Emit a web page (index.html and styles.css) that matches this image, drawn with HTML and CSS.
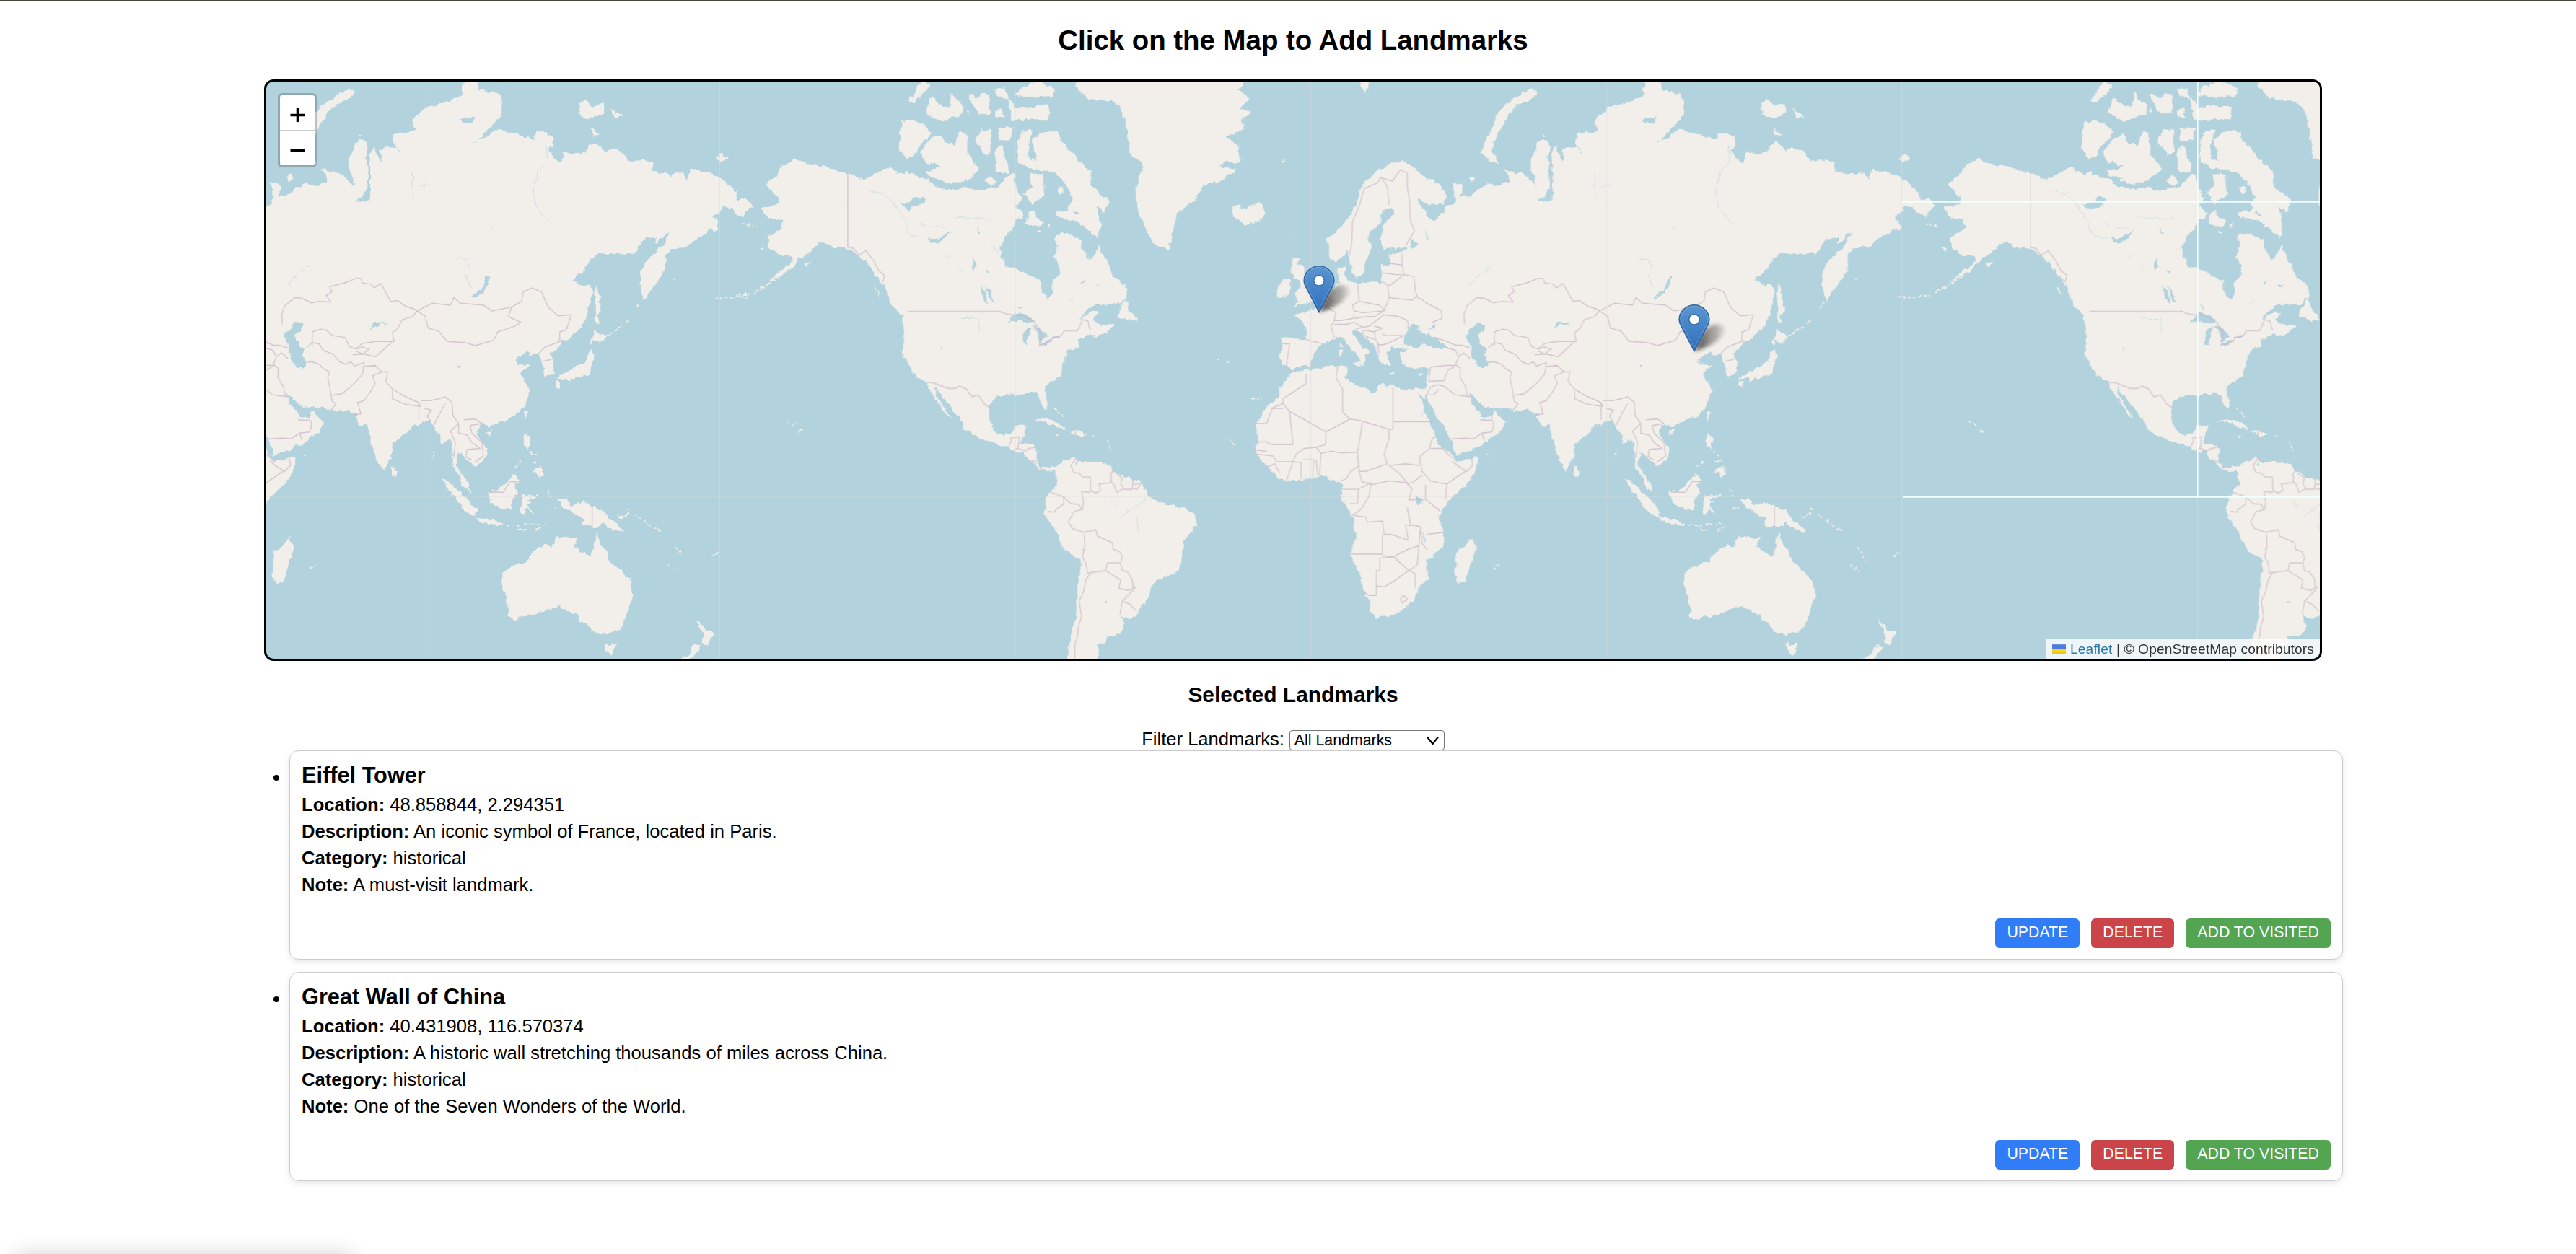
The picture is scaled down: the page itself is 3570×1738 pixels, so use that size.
FILE: index.html
```html
<!DOCTYPE html>
<html lang="en">
<head>
<meta charset="utf-8">
<title>Landmarks</title>
<link rel="stylesheet" href="styles.css">
</head>
<body>
<main class="page">
  <h2 class="title">Click on the Map to Add Landmarks</h2>
  <section class="map">
    <svg class="tiles" viewBox="-2898.6 24.6 6198 1511.3" preserveAspectRatio="none">
      <defs>
        <filter id="coast" filterUnits="userSpaceOnUse" x="-2900" y="0" width="6220" height="1560">
          <feTurbulence type="fractalNoise" baseFrequency="0.06" numOctaves="3" seed="4" result="n"/>
          <feDisplacementMap in="SourceGraphic" in2="n" scale="15" xChannelSelector="R" yChannelSelector="G"/>
        </filter>
        <g id="world">
          <g class="land">
            <!-- Europe and western Asia -->
            <path d="M530 230 562 248 600 275 640 290 663 325 655 345 615 348 575 330 583 350 600 358 605 380 630 390 640 375 655 365 660 350 690 345 690 320 685 290 710 295 715 308 702 325 730 328 760 305 790 290 815 298 843 288 856 284 850 270 835 250 860 262 890 264 925 290 936 300 930 280 918 250 918 230 935 200 940 180 970 178 976 195 968 225 975 250 975 300 960 325 938 335 970 342 1000 325 1000 800 900 885 815 878 780 878 760 865 745 847 732 842 740 865 765 890 770 905 800 900 812 885 825 905 846 915 830 940 805 955 775 975 730 990 690 1003 680 965 655 930 632 900 615 870 600 848 599 828 606 805 612 778 590 773 560 778 530 765 522 738 545 727 525 722 500 722 482 735 495 765 475 768 462 758 455 735 450 717 430 705 408 688 390 672 378 675 380 690 405 715 435 735 420 738 415 765 406 770 402 750 370 720 350 692 325 697 300 712 285 710 265 740 250 768 215 772 195 780 180 768 165 765 160 740 168 710 163 695 200 697 240 700 242 670 208 635 240 625 270 615 285 600 305 590 325 560 340 550 335 515 360 505 355 530 365 545 395 555 440 548 465 552 470 520 465 505 493 503 488 477 530 470 548 460 500 463 475 462 465 440 470 405 505 370 500 355 478 358 465 375 465 395 430 420 428 440 440 462 420 490 415 525 388 540 370 490 365 465 350 485 330 497 310 485 305 435 340 410 365 385 395 340 400 310 425 280 460 255 500 240Z"/>
            <!-- Africa -->
            <path d="M200 785 240 780 290 772 335 770 360 768 366 782 358 800 370 810 400 820 440 838 455 835 460 815 500 820 530 832 575 828 598 826 600 850 592 855 577 838 592 875 608 905 623 940 645 980 670 992 685 1012 690 1020 760 1008 755 1040 720 1085 680 1112 650 1148 640 1165 655 1200 657 1240 605 1280 607 1325 580 1350 570 1380 525 1415 450 1430 437 1415 432 1385 410 1355 400 1310 372 1265 390 1220 383 1170 365 1140 345 1115 350 1080 340 1070 310 1072 300 1058 270 1060 225 1068 180 1072 155 1060 125 1035 100 1010 85 985 95 965 90 920 115 885 135 865 155 850 160 830 190 792Z"/>
            <path d="M740 1218 753 1245 735 1295 718 1335 700 1338 685 1315 692 1290 690 1257 720 1240ZM920 42 937 50 925 70 880 85 855 105 830 145 805 180 805 210 822 240 800 235 765 208 785 175 800 150 815 110 840 85 885 60ZM395 20H430L420 58 408 40ZM18 352 40 345 45 360 80 348 100 340 118 370 95 392 65 402 38 390 20 375ZM200 488H220L212 502 236 508 233 530 255 560 270 585 255 605 200 612 215 600 203 580 225 565 220 545 203 540 195 510ZM175 540 195 545 190 580 155 592 152 575 160 553ZM732 275 745 267 752 278 738 288ZM345 705 350 722 340 720ZM340 725 350 728 348 746 339 745ZM378 762 405 760 400 772ZM490 785 513 788 495 793ZM578 790 594 787 582 796Z"/>
            <!-- Asia, east of the Ob -->
            <g transform="translate(650)">
              <path d="M333 345V240L330 215 345 190 350 210 365 235 370 225 360 205 385 195 410 198 430 220 435 260 425 240 415 215 425 210 405 190 405 160 455 155 470 150 458 130 470 115 500 95 550 80 580 72 615 60 605 45 620 20 660 20 660 45 720 55 733 85 725 115 700 140 665 175 625 195 680 170 715 150 740 155 770 160 800 170 828 175 835 155 860 160 885 170 885 195 870 205 895 230 908 237 918 208 945 215 985 210 990 190 1010 183 1040 205 1060 200 1090 205 1115 233 1160 230 1185 237 1188 260 1240 268 1275 262 1290 280 1298 255 1350 262 1385 275 1420 300 1440 320 1445 335 1465 330 1488 348 1465 365 1462 382 1440 372 1420 355 1395 348 1392 365 1365 378 1380 390 1383 415 1360 412 1340 425 1310 440 1290 462 1275 455 1240 465 1225 480 1222 520 1205 540 1195 560 1180 570 1160 600 1148 560 1148 520 1160 500 1190 475 1220 450 1235 418 1222 422 1218 435 1195 450 1195 432 1165 435 1145 455 1130 475 1090 475 1060 475 1020 475 1000 490 980 515 945 545 975 560 990 555 1005 570 997 605 990 640 965 670 935 700 912 703 900 720 878 737 888 760 887 790 860 797 858 775 850 755 840 738 815 742 810 728 785 745 770 750 780 765 818 768 800 778 787 790 800 810 815 835 808 855 790 885 760 905 720 918 695 930 670 920 655 935 660 955 685 985 687 1005 670 1020 648 1035 640 1020 625 1015 610 1000 598 995 592 1025 600 1038 612 1055 630 1075 637 1100 612 1083 603 1057 582 1035 583 1000 575 960 545 972 545 950 525 930 515 910 485 920 465 925 445 940 400 975 398 1010 375 1042 355 1020 335 970 325 920 305 928 285 905 295 897 280 892 265 885 215 885 200 600 250 345Z"/>
              <path d="M965 80 985 72 1005 90 1035 80 1040 105 1018 116 990 122 965 110ZM1055 95 1080 105 1097 118 1070 118ZM1000 145 1028 165 1005 165ZM1375 228 1395 213 1413 225 1395 233ZM398 1030 415 1045 412 1060 398 1058ZM685 940 705 937 690 952ZM800 890 812 888 800 915ZM1018 555 1025 590 1033 628 1020 635 1025 660 1012 660 1015 620 1008 580ZM1008 672 1045 693 1025 710 1005 703 1000 715 995 708 1008 690ZM1000 725 1012 740 1000 770 997 790 960 800 935 802 910 803 895 802 930 785 960 770 985 760 990 740ZM893 806 910 812 903 830 895 820ZM925 803 940 800 930 812ZM548 1065 575 1075 610 1105 655 1145 653 1165 620 1150 590 1115ZM653 1165 700 1170 740 1185 700 1185 660 1175ZM685 1098 720 1095 765 1052 783 1068 770 1080 780 1105 765 1115 757 1145 735 1145 705 1135 690 1115ZM793 1105 805 1110 835 1108 845 1100 840 1112 805 1118 820 1125 806 1130 826 1158 805 1142 798 1160 785 1150 790 1125ZM800 948 817 955 812 985 825 992 800 982 795 965ZM848 1030 858 1055 840 1058 835 1048 820 1048ZM897 1118 925 1118 940 1135 975 1125 1040 1150 1055 1170 1075 1180 1100 1203 1065 1198 1035 1180 1015 1190 970 1185 980 1170 940 1150 915 1138ZM1075 1163 1098 1163 1112 1150 1115 1158 1090 1168Z"/>
              <!-- Australia and New Zealand -->
              <path d="M1017 1207 1028 1238 1045 1248 1055 1280 1090 1305 1120 1335 1127 1370 1110 1410 1095 1450 1080 1462 1040 1472 1000 1465 985 1440 965 1440 960 1420 945 1418 905 1398 860 1408 830 1422 790 1425 770 1435 745 1425 752 1410 730 1340 733 1308 770 1290 805 1282 820 1262 860 1235 880 1245 895 1215 960 1220 948 1245 1000 1267 1010 1230ZM1037 1495 1055 1500 1075 1495 1062 1528 1047 1517ZM1315 1430 1332 1445 1345 1462 1372 1465 1350 1500 1335 1495 1340 1475ZM1312 1498 1330 1503 1312 1530 1275 1545 1265 1540 1295 1525Z"/>
              <path class="islets" d="M745 1186 785 1188M795 1184 850 1184M780 1195 805 1200M830 1200 860 1188M875 1141 900 1141M868 1095 878 1112M815 995 835 1005M825 1020 850 1015M770 1035 790 1018M1135 1160 1150 1170M1160 1175 1180 1188M1190 1190 1210 1203M1232 1290 1258 1308M1255 1240 1280 1280M1362 1268 1385 1256M1110 1140 1120 1148M1045 690 1090 667M1105 655 1115 648M1140 615 1155 600M1250 540 1255 545M1375 590 1430 590M1445 585 1480 580M1495 572 1525 562M1535 552 1570 538M1470 398 1500 405M525 995 523 1010M133 1002 140 1003M152 1299 178 1290M300 166 310 166M85 275 98 275"/>
            </g>
            <!-- The Americas -->
            <g transform="translate(-1350)">
              <path d="M-42 295-25 280-7 275 0 250 25 240 50 225 75 238 130 245 180 260 207 265 255 283 280 270 335 248 345 262 370 265 385 262 400 268 450 280 470 300 510 308 540 305 560 300 590 310 630 305 660 300 690 270 708 265 715 300 722 320 735 330 712 350 740 370 735 385 715 385 705 410 680 430 665 460 670 485 690 510 720 515 760 535 790 545 790 570 812 597 825 580 820 550 845 530 843 505 828 485 840 460 832 425 870 422 910 440 915 465 935 490 950 480 965 455 995 505 1010 535 1045 560 1050 590 1020 608 950 610 920 630 905 650 940 628 965 630 945 645 965 660 1010 662 960 690 950 685 905 700 905 718 870 730 858 760 850 795 805 820 798 835 810 870 803 885 790 870 783 845 765 838 720 843 712 850 690 843 655 850 635 870 635 910 650 940 670 950 700 945 710 925 745 925 735 955 728 972 770 975 778 990 775 1020 790 1035 830 1033 845 1025 850 1050 830 1042 810 1047 780 1035 755 1015 735 995 705 990 685 980 650 973 610 960 560 935 545 905 510 870 480 835 468 825 475 850 518 905 500 895 480 865 455 835 445 812 410 795 385 760 372 735 375 690 370 640 335 605 318 560 290 530 265 500 240 480 207 462 160 460 150 450 120 445 100 465 56 492 40 510 0 535-30 545 5 520 44 495 38 480 4 480-31 460-36 430 10 410 7 385-30 385-53 355-2 345-2 330Z"/>
              <path d="M832 1040 855 1020 895 1008 900 1022 960 1022 1000 1030 1010 1045 1040 1060 1090 1070 1110 1105 1125 1115 1160 1130 1220 1140 1255 1160 1258 1185 1220 1230 1215 1280 1195 1312 1150 1325 1125 1345 1120 1365 1095 1395 1075 1425 1060 1432 1030 1425 1043 1450 1030 1470 985 1478 985 1495 960 1498 965 1515 955 1550H870L878 1480 895 1430 900 1350 910 1280 855 1245 830 1195 800 1155 808 1110 838 1080Z"/>
              <path d="M895 15V38L930 70 1000 75 1030 90 1045 130 1060 215 1062 225 1085 230 1100 255 1085 270 1075 330 1085 370 1110 415 1130 450 1175 465 1185 430 1200 370 1260 330 1280 295 1330 285 1385 255 1325 245 1350 232 1390 240 1385 190 1345 170 1400 150 1395 120 1425 105 1390 95 1418 70 1385 45 1420 15Z"/>
              <path d="M720 180 735 155 765 150 750 190 755 225 775 235 770 200 760 175 800 155 840 155 848 180 880 205 900 230 940 260 940 300 997 335 980 368 955 350 970 395 962 435 900 390 835 378 835 365 870 362 885 330 860 285 830 262 755 252 722 235ZM425 210 460 170 490 165 500 185 520 185 530 195 545 155 565 160 570 215 605 255 560 285 520 293 450 273 440 262 490 245 440 235ZM370 130 400 127 430 132 460 160 425 190 410 215 385 227 360 200ZM590 180 610 150 640 150 640 205 625 220ZM660 145 708 145 695 180 660 180ZM650 205 668 190 692 245 690 265 655 260ZM690 60 715 95 740 90 815 88 812 125 700 125ZM650 45 680 42 690 70 665 65ZM650 100 668 95 678 120 655 118ZM710 60 725 40 780 22 832 42 825 62 760 66ZM390 75 430 20 455 35 435 60 400 80ZM440 105 460 65 490 90 515 90 520 50 535 75 558 85 555 110 490 130ZM570 58 600 70 615 55 635 60 635 110 600 108 582 85ZM745 398 752 365 768 362 775 380 803 392 780 405ZM758 265 795 268 800 325 775 335 765 350 745 320 735 320 762 300ZM840 300 856 300 860 315 845 320ZM775 418 790 412 785 422ZM808 400 820 396 815 408ZM620 285 635 270 655 285 640 300ZM565 98 575 98 572 108ZM1045 595 1060 625 1082 650 1060 650 1018 640 1030 615ZM948 690 975 672 1012 660 985 685 958 693ZM770 913 800 907 840 917 868 935 840 930 800 915ZM875 943 895 937 928 948 900 955ZM832 950 848 951 840 955ZM940 950 955 951 948 955ZM285 555 305 585 295 578ZM335 600 385 630 378 635 345 618ZM72 500 95 495 82 512ZM-60 462-45 460-50 466ZM55 935 70 940 62 945Z"/>
              <path class="islets" d="M22 915 26 917M38 922 45 925M-145 590-90 588M-80 580-65 572M-55 565-30 550M-25 545 15 525M1320 751 1330 753M1350 757 1356 760M1427 855 1460 855M1355 962 1378 978M990 965 1000 995M830 880 860 905M1515 231 1525 229M1534 427 1540 425M-110 398-90 405"/>
            </g>
          </g>
          <g class="water">
            <path d="M533 712 540 685 556 660 580 663 578 676 600 685 630 695 667 722 635 724 600 712 565 722ZM605 672 632 655 628 668ZM720 690 745 668 755 655 780 660 778 675 755 685 765 705 770 720 785 725 778 740 790 760 788 773 760 772 742 750 738 720ZM1285 590 1320 570 1335 532 1343 535 1335 560 1318 580 1295 592ZM985 672 995 658 1030 656 1040 662 1010 661ZM570 1115 592 1113 592 1130 572 1132ZM545 1140 552 1175 562 1188 550 1175ZM590 1195 600 1225 598 1235ZM555 435 578 445 572 460 556 458ZM598 410 612 440 605 435ZM1250 125 1300 118 1290 135 1265 133ZM1242 770 1254 768 1250 775ZM618 885 623 890 620 892Z"/>
            <path transform="translate(-1350)" d="M690 656 710 632 740 632 770 652 750 656 725 650ZM736 710 735 685 745 672 760 668 750 690 747 715ZM762 664 785 670 812 690 795 700 785 710 780 685ZM780 718 800 705 825 700 805 713ZM820 695 850 688 840 697ZM605 560 620 570 630 608 615 595ZM620 558 638 575 648 605 640 600ZM365 345 395 340 410 325 440 330 425 350 400 352 390 365ZM450 432 470 440 520 415 500 435 480 448 455 445ZM490 488 540 474 510 482ZM585 485 595 510 583 520ZM600 405 608 425 598 418ZM620 515 632 525 622 528ZM720 612 734 615 728 622ZM893 1018 900 1025 895 1032ZM978 1388 990 1386 985 1391ZM485 718 493 724 488 727ZM910 550 920 548 915 555ZM955 556 975 558 960 562ZM885 365 905 370 895 375ZM912 1248 920 1250 916 1255Z"/>
            <path class="river" d="M1515 190 1518 235 1490 260 1475 310 1485 355 1528 400M1110 265 1112 330M1130 300 1160 295M1240 485 1275 488 1280 515M1270 530 1288 565M1345 405 1360 415M735 560 745 540 800 508M580 840 600 870 585 900"/>
            <path class="river" transform="translate(-1350)" d="M270 310 320 320 350 350 385 395 390 425 440 435M1030 1165 1110 1115M1000 1125 1015 1138M1080 1155 1082 1200M540 645 600 645 605 680M460 405 500 410M530 380 640 385M640 455 660 470M870 600 885 598M540 510 550 520M425 395 440 400M260 490 290 545"/>
          </g>
        </g>
        <g id="borders">
          <path d="M372 480 378 440 380 390 400 350 415 305 455 290 465 275 485 300 490 348M460 275 500 285 525 255 545 265 545 300 552 340 555 390 567 415 540 455M490 500 530 505 530 475M470 525 510 530 530 530M530 505 535 530 490 560 470 548M535 530 565 535 570 575 575 585 560 597 490 590 485 555M575 590 590 595 600 603 648 625 650 645 620 655M395 555 400 600 380 610 385 625 410 630 475 625 490 592M400 600 430 605 460 610 480 625M285 605 320 625 330 630 325 650 345 650 380 645 385 635M325 650 315 665 325 695M325 660 360 660 385 655 410 668 390 672M385 645 425 640 445 640 475 625M410 668 430 665 475 635 520 640 545 650 550 668 540 670M410 675 445 680 470 670 445 665M445 680 450 700 460 715 480 712 535 690M410 675 415 690 445 700M455 710 460 735M470 685 480 690 535 690M240 700 285 710M168 710 190 712 180 768M305 590 320 600M718 660 716 635 725 612 755 590 778 592 805 604 830 600 865 602 850 585 868 575 860 562 905 552 940 540 955 540 960 552 985 555 995 565 1015 553 1045 600 1065 598 1090 613 1115 620 1125 625 1110 640 1080 648 1065 672 1050 682 1055 705 1000 705 960 710 940 725 920 718 908 695 890 692 870 690 850 675 833 673 808 680V718M790 722 808 708 830 712 840 728 870 738 890 758 910 765 925 758 935 770 965 760 960 790 935 815 915 830 898 842 865 846 860 820 855 800 860 785 840 775 830 765 805 758 790 760M630 695 665 705 690 715 710 715 735 722M665 722 690 728 700 745 715 735 735 750M615 772 660 768 690 768 700 745M690 765 705 775 705 800 722 825 725 845 735 850M615 772 610 810 635 808 655 808 668 780 690 770M600 850 615 825 635 818 655 822 690 845 735 850M595 845 625 845 640 830M765 910 800 912 800 895M805 912 805 930 800 942 770 945 745 960 720 958 680 960M770 945 778 965M865 848 868 862 880 868 865 885M1018 785 990 795 998 815 985 835 965 860 945 865 955 895 935 897M965 770 1000 770 1018 785 1036 785 1030 810 1050 830 1090 850 1130 865 1135 875 1090 870 1050 855 1050 835M1135 860 1165 860 1190 855 1210 850 1230 865 1233 900 1250 920M1130 865 1130 910M1145 880 1168 885 1155 900 1165 915M1210 868 1195 890 1175 925M1250 920 1225 940 1240 970 1235 1010M1250 920 1250 945 1275 950 1290 970 1315 985 1275 988 1272 1008 1290 1015M1265 910 1300 908 1320 920 1285 925 1290 945 1320 970 1325 1005 1300 1020M1125 625 1150 640 1158 670 1190 678 1215 705 1270 708 1300 716 1355 702 1368 680 1420 665 1438 655 1400 640 1410 615 1350 625 1325 610 1255 605 1235 590 1225 610 1170 605 1125 625M1410 615 1440 600 1445 575 1470 565 1500 575 1520 615 1550 638 1590 635 1575 675 1555 680 1555 705 1510 720 1490 738M1505 757 1530 752M940 725 960 720 980 725 960 738 940 730M930 740 965 738 1000 745 1050 705M970 770 1000 768M1340 1100 1385 1100 1405 1072 1430 1072"/>
          <path d="M240 790V815L170 855V868M335 770 330 800 350 830V890L372 908 300 942 190 888 170 868 135 880M170 880H138L120 920H90M190 888 200 975H135L120 968H95M372 908 402 912 490 935 502 935V825M502 915H622M490 935V960L475 1000 485 1025 420 1045 400 1045 395 995 405 945 410 912M300 942 298 975 270 982 285 998 315 992 345 997 395 995M270 982 235 985 210 1000 200 1020 150 1020 140 1005 90 1000M90 990 120 992M200 1020 190 1045 180 1070M200 1020 225 1022 225 1065M230 1015H262L260 1060M270 1015 275 1058M285 998 280 1055M120 1035 145 1025 160 1050M395 1010 400 1030 375 1045 360 1065 345 1070M400 1045 408 1072 440 1080 490 1070 545 1075 520 1050 490 1030 540 1025 580 1030 585 1005 612 985 620 960 630 955M615 985 650 985 680 1010M585 1020 590 1045 615 1070 640 1075 665 1078 720 1045M680 1018 700 1032 725 1045 742 1030 740 1012M665 1078 660 1120M590 1055 560 1075 545 1078 560 1090 550 1120 600 1118 645 1150M600 1118 600 1080M350 1092 398 1092 395 1130 370 1130M398 1092 435 1075 430 1110 405 1145 380 1160 420 1165 425 1178 470 1175 475 1210H495L530 1220 548 1225 540 1185 555 1187 545 1140M470 1210V1262L372 1262M470 1265 500 1270 545 1250 580 1240 585 1190 555 1185M605 1210 655 1205M585 1200 590 1235 605 1250M580 1240 575 1290 550 1305 505 1270 462 1272V1305H452V1370L430 1370 415 1362M452 1345 475 1348 500 1335 550 1305 568 1312 570 1350M524 1380 535 1370 545 1380 530 1390Z"/>
          <path transform="translate(-1350)" d="M207 458 225 462 240 480 262 467 285 495 300 520 318 532 312 550M662 625 680 632 700 635 735 637 770 655 790 680 785 715 820 705 825 695 850 690 860 677 900 677 915 648 932 652 935 668 940 675M447 812 465 813 490 822 510 828 530 828 545 822 565 830 580 850 600 845 620 870 637 880M690 985 700 965 698 957 725 955 720 985M705 990 720 985 740 992 755 985 775 982M755 1015 775 1020M785 1030 788 1040M895 1010 880 1030 888 1048 905 1050 915 1060 938 1060 940 1095 955 1102 970 1095 965 1078 1000 1075 1003 1060 998 1055 1010 1040M1015 1050 1035 1062 1030 1078 1040 1090 1018 1100 1010 1080 1002 1072M1068 1062 1065 1092 1040 1092M1070 1080 1092 1075 1080 1092 1068 1090M940 1100 912 1098 918 1125 915 1145 890 1150 872 1178 885 1195 918 1205 955 1198 960 1215 1005 1232 1008 1250 1027 1255 1035 1270 1030 1285 990 1285 985 1305 940 1310 930 1312 925 1285 915 1270 922 1240 920 1210M820 1100 858 1112 880 1130 905 1132 912 1145M858 1112 858 1130 835 1145 830 1152 812 1150M985 1305 1030 1330 1025 1352 1055 1357 1068 1350 1065 1328 1050 1308 1035 1305 1030 1285M1068 1345 1075 1350 1035 1385 1028 1420M1035 1385 1058 1393 1078 1412M940 1310 925 1330 918 1360 905 1385 912 1425 902 1455 900 1475 892 1500V1540M893 940 895 953"/>
          <path d="M-1143 265V458M-964 626.500H-688M1653 1133V1190"/>
        </g>
      </defs>
      <g filter="url(#coast)">
        <use href="#world" x="-3568"/>
        <use href="#world"/>
        <use href="#world" x="3568"/>
      </g>
      <g class="borders">
        <use href="#borders" x="-3568"/>
        <use href="#borders"/>
        <use href="#borders" x="3568"/>
      </g>
      <path class="seam" d="M-2422 0V1540M-1530 0V1540M-638 0V1540M254 0V1540M1147 0V1540M2038 0V1540M2931 1112V1540M-2900 337H2038M-2900 1111H2038"/>
      <path class="gap" d="M2038 339.500H3310M2041 1112.500H3310M2931 0V1112"/>
    </svg>

    <svg class="pin pin-paris" viewBox="0 0 41 41"><use href="#pin"/></svg>
    <svg class="pin pin-china" viewBox="0 0 41 41">
      <defs>
        <linearGradient id="fill" x1="0" y1="0" x2="0" y2="1"><stop offset="0" stop-color="#5a96cf"/><stop offset="1" stop-color="#2f6fbd"/></linearGradient>
        <linearGradient id="edge" x1="0" y1="0" x2="0" y2="1"><stop offset="0" stop-color="#35679f"/><stop offset="1" stop-color="#2b5f9f"/></linearGradient>
        <linearGradient id="fade" gradientUnits="userSpaceOnUse" x1="13" y1="0" x2="40" y2="0"><stop offset=".2" stop-color="#222" stop-opacity=".65"/><stop offset="1" stop-color="#222" stop-opacity=".08"/></linearGradient>
        <filter id="soft" x="-30%" y="-30%" width="160%" height="160%"><feGaussianBlur stdDeviation="1.6"/></filter>
        <g id="pin">
          <path d="M13 40.500C15 32 19 23 26 19 33 15.500 40 18 38 24 35 32 22 38 13 40.500Z" fill="url(#fade)" filter="url(#soft)"/>
          <path d="M12.500.5C5.900.5-.5 5.900-.5 12.800c0 2.300.9 4.500 2 6.500L12.500 40.300 23.500 19.300c1.100-2 2-4.200 2-6.500C25.500 5.900 19.100.5 12.500.5Z" fill="url(#fill)" stroke="url(#edge)"/>
          <path d="M12.500 1.600C6.500 1.600.7 6.500.7 12.800c0 2.100.8 4.100 1.800 6L12.500 37.800l10-19c1-1.900 1.800-3.900 1.800-6 0-6.300-5.800-11.200-11.800-11.200Z" fill="none" stroke="#fff" stroke-opacity=".12"/>
          <circle cx="12.500" cy="13" r="4.500" fill="#fff" stroke="#35679f" stroke-width=".8"/>
        </g>
      </defs>
      <use href="#pin"/>
    </svg>

    <div class="zoom">
      <a class="zoom-btn"><svg viewBox="0 0 48 48"><path d="M14.500 27.500H34.500M24.500 18V37"/></svg></a>
      <a class="zoom-btn"><svg viewBox="0 0 48 48"><path d="M14.500 27.500H34.500"/></svg></a>
    </div>
    <div class="credit">
      <svg class="flag" viewBox="0 0 12 8"><path fill="#4C7BE1" d="M0 0h12v4H0z"/><path fill="#FFD500" d="M0 4h12v3H0z"/><path fill="#E0BC00" d="M0 7h12v1H0z"/></svg>
      <span><a class="link">Leaflet</a> | © OpenStreetMap contributors</span>
    </div>
  </section>

  <h3 class="subtitle">Selected Landmarks</h3>
  <div class="filter">
    <label for="kind">Filter Landmarks:</label>
    <div class="select" id="kind"><span>All Landmarks</span><svg class="chevron" viewBox="0 0 17 13"><path d="M1 1.500 8.500 11 16 1.500"/></svg></div>
  </div>

  <ul class="list">
    <li>
      <article class="card">
        <h3 class="name">Eiffel Tower</h3>
        <p><strong>Location:</strong> 48.858844, 2.294351</p>
        <p><strong>Description:</strong> An iconic symbol of France, located in Paris.</p>
        <p><strong>Category:</strong> historical</p>
        <p><strong>Note:</strong> A must-visit landmark.</p>
        <div class="actions"><button class="btn update">UPDATE</button><button class="btn delete">DELETE</button><button class="btn visited">ADD TO VISITED</button></div>
      </article>
    </li>
    <li>
      <article class="card">
        <h3 class="name">Great Wall of China</h3>
        <p><strong>Location:</strong> 40.431908, 116.570374</p>
        <p><strong>Description:</strong> A historic wall stretching thousands of miles across China.</p>
        <p><strong>Category:</strong> historical</p>
        <p><strong>Note:</strong> One of the Seven Wonders of the World.</p>
        <div class="actions"><button class="btn update">UPDATE</button><button class="btn delete">DELETE</button><button class="btn visited">ADD TO VISITED</button></div>
      </article>
    </li>
  </ul>
</main>
<div class="status-shadow"></div>
</body>
</html>
```
FILE: styles.css
```css
* { box-sizing: border-box; }
html, body { height: 100%; }
body {
  margin: 0;
  position: relative;
  overflow: hidden;
  background: #fff;
  color: #000;
  font: 25.6px/29px "Liberation Sans", Arial, sans-serif;
}
h2, h3, p, ul { margin: 0; padding: 0; }
.page {
  height: 1738px;
  padding: 0 352px 0 366px;
  border-top: 2px solid #45463b;
}
.title {
  height: 108px;
  padding-top: 32px;
  font-size: 38.4px;
  line-height: 44px;
  text-align: center;
}
.map {
  position: relative;
  height: 806px;
  border: 3px solid #000;
  border-radius: 13px;
  overflow: hidden;
  background: #b2d2dd;
}
.tiles { display: block; width: 100%; height: 100%; }
.land { fill: #f2efea; }
.islets { fill: none; stroke: #f2efea; stroke-width: 3.5; stroke-dasharray: 9 5; }
.water { fill: #b2d2dd; }
.river { fill: none; stroke: #b2d2dd; stroke-width: 1.6; stroke-opacity: .7; }
.borders { fill: none; stroke: #c9b6c6; stroke-opacity: .75; stroke-width: 2.8; stroke-linejoin: round; }
.seam { fill: none; stroke: #dcdcdc; stroke-opacity: .6; stroke-width: 1.8; }
.gap { fill: none; stroke: #f2ffff; stroke-width: 3.6; }
.pin { position: absolute; width: 65.6px; height: 65.6px; overflow: visible; }
.pin-paris { left: 1439px; top: 254.500px; }
.pin-china { left: 1959px; top: 309px; }
.zoom {
  position: absolute;
  left: 16px;
  top: 16px;
  width: 54px;
  height: 103px;
  border: 3px solid rgba(0, 0, 0, .2);
  border-radius: 6px;
  background: #fff;
  background-clip: padding-box;
  overflow: hidden;
}
.zoom-btn { display: block; height: 48px; }
.zoom-btn + .zoom-btn { border-top: 1px solid #ccc; height: 49px; }
.zoom-btn svg { display: block; width: 48px; height: 48px; fill: none; stroke: #000; stroke-width: 3.6; }
.credit {
  position: absolute;
  right: 0;
  bottom: 0;
  display: flex;
  align-items: center;
  gap: 6px;
  height: 27px;
  padding: 0 8px;
  background: rgba(255, 255, 255, .8);
  color: #333;
  font-size: 19.2px;
  line-height: 27px;
  letter-spacing: .11px;
  white-space: nowrap;
}
.flag { width: 19px; height: 13px; }
.link { color: #2a7ab0; }
.subtitle {
  padding-top: 29px;
  font-size: 29.95px;
  line-height: 36px;
  text-align: center;
}
.filter {
  display: flex;
  justify-content: center;
  gap: 7px;
  padding-top: 29px;
  height: 59px;
}
.select {
  display: flex;
  align-items: center;
  justify-content: space-between;
  width: 215px;
  height: 28px;
  margin-top: 2px;
  padding: 0 7px 0 6px;
  border: 1px solid #767676;
  border-radius: 4px;
  font-size: 21.33px;
}
.chevron { width: 17px; height: 13px; fill: none; stroke: #000; stroke-width: 2.2; }
.list { width: 2881px; padding-left: 35px; }
.card {
  height: 290px;
  margin-bottom: 17px;
  padding: 17px 16px 0;
  border: 1px solid #ccc;
  border-radius: 13px;
  box-shadow: 0 3px 8px rgba(0, 0, 0, .1);
}
.name { margin-bottom: 5px; font-size: 30.72px; line-height: 34px; }
.card p { line-height: 37px; }
.actions { display: flex; justify-content: flex-end; gap: 16px; margin-top: 28px; }
.btn {
  height: 41px;
  padding: 0 16px 2px;
  border: 0;
  border-radius: 6px;
  color: #fff;
  font: 21.33px "Liberation Sans", Arial, sans-serif;
}
.update { background: #317df8; }
.delete { background: #cb444a; }
.visited { background: #53a551; }
.status-shadow {
  position: absolute;
  left: 25px;
  bottom: -24px;
  width: 460px;
  height: 20px;
  box-shadow: 0 0 28px 3px rgba(0, 0, 0, .2);
}
```
